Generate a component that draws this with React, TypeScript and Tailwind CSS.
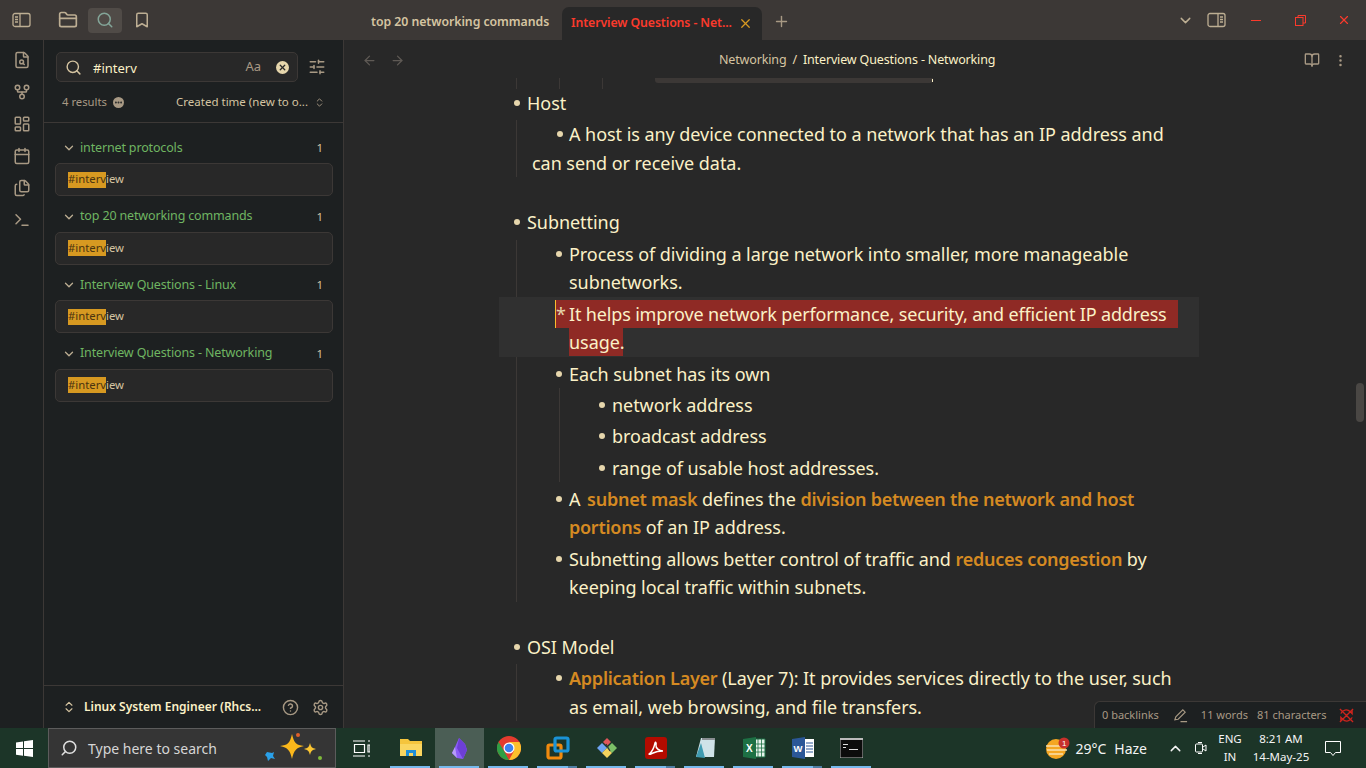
import React, { FunctionComponent, ReactNode } from 'react'
import {
  ArrowLeft, ArrowRight, Bookmark, BookOpen, Calendar, ChevronDown, ChevronsUpDown, ChevronUp, CircleHelp, Ellipsis,
  FileSearch, Files, FolderClosed, GitFork, LayoutDashboard, MoreVertical, Plus, Search, Settings, SlidersHorizontal, Terminal, X,
} from 'lucide-react'

const results = ['internet protocols', 'top 20 networking commands', 'Interview Questions - Linux', 'Interview Questions - Networking']

const Item: FunctionComponent<{ className?: string; children: ReactNode }> = ({ className = '', children }) => (
  <div className={`relative leading-[28px] ${className}`}>
    <span className="absolute left-[-13px] top-[11px] h-[6px] w-[6px] rounded-full bg-[#e6d6ac]" />
    {children}
  </div>
)

const Hl: FunctionComponent<{ children: ReactNode }> = ({ children }) => <b className="font-semibold tracking-[-0.25px] text-[#d58a22]">{children}</b>

const Result: FunctionComponent<{ title: string }> = ({ title }) => (
  <div>
    <div className="flex h-[32px] items-center pl-[18px] pr-[20px] pt-[2px] text-[#6fb562]">
      <ChevronDown size={14} className="text-[#bdae93]" strokeWidth={2.2} />
      <span className="ml-[4px] flex-1 text-[12.5px] tracking-[-0.15px]">{title}</span>
      <span className="text-[11.5px] text-[#d5c4a1]">1</span>
    </div>
    <div className="ml-[11px] mr-[10px] flex h-[33px] items-center rounded-[5px] border border-[#3c3836] bg-[#282828] px-[12px] text-[11.3px] text-[#d5c4a1]">
      <span className="flex h-[16px] items-center bg-[#d79921] text-[#4b3410]">#interv</span>iew
    </div>
  </div>
)

const Sidebar = () => (
  <aside className="flex w-[300px] shrink-0 flex-col border-r border-[#3c3836] bg-[#1d2021]">
    <div className="flex items-center pl-[12px] pr-[16px] pt-[12px]">
      <div className="flex h-[30px] w-[242px] items-center rounded-[5px] border border-[#3c3836] bg-[#282828] pl-[8px] pr-[8px]">
        <Search size={17} className="text-[#d5c4a1]" />
        <span className="ml-[11px] flex-1 pt-[3px] text-[13px] text-[#fbf1c7]">#interv</span>
        <span className="text-[13px] text-[#a89984]">Aa</span>
        <span className="ml-[15px] flex h-[13px] w-[13px] items-center justify-center rounded-full bg-[#e6d6ac]">
          <X size={9} strokeWidth={3.5} className="text-[#282828]" />
        </span>
      </div>
      <SlidersHorizontal size={18} className="ml-[10px] text-[#a89984]" />
    </div>
    <div className="flex h-[41px] items-center border-b border-[#3c3836] pl-[18px] pr-[18px]">
      <span className="text-[11.3px] text-[#a89984]">4 results</span>
      <span className="ml-[6px] flex h-[11px] w-[11px] items-center justify-center rounded-full bg-[#a89984]">
        <Ellipsis size={9} strokeWidth={3} className="text-[#1d2021]" />
      </span>
      <span className="ml-auto text-[11.5px] text-[#d5c4a1]">Created time (new to o...</span>
      <ChevronsUpDown size={11} className="ml-[6px] text-[#a89984]" />
    </div>
    <div className="flex flex-1 flex-col gap-[3.5px] pt-[8px]">
      {results.map((title) => <Result key={title} title={title} />)}
    </div>
    <div className="flex h-[43px] items-center border-t border-[#3c3836] pl-[18px] pr-[14px]">
      <ChevronsUpDown size={14} className="text-[#d5c4a1]" />
      <span className="ml-[8px] flex-1 text-[12px] font-semibold text-[#fbf1c7]">Linux System Engineer (Rhcs...</span>
      <CircleHelp size={17} className="text-[#a89984]" />
      <Settings size={17} className="ml-[13px] text-[#a89984]" />
    </div>
  </aside>
)

const Ribbon = () => (
  <nav className="flex w-[44px] shrink-0 flex-col items-center gap-[14px] border-r border-[#3c3836] bg-[#1d2021] pt-[11px] text-[#a89984]">
    <FileSearch size={18} />
    <GitFork size={18} />
    <LayoutDashboard size={18} />
    <Calendar size={18} />
    <Files size={18} />
    <Terminal size={18} />
  </nav>
)

const TitleBar = () => (
  <header className="flex h-[40px] shrink-0 bg-[#3c3836] text-[#bdae93]">
    <div className="flex items-center pl-[12px]">
      <svg width="19" height="16" viewBox="0 0 19 16" fill="none" stroke="currentColor" strokeWidth="1.3">
        <rect x="1" y="1.5" width="17" height="13" rx="2" />
        <path d="M8 1.5v13M3 5h3M3 7.5h3M3 10h3" />
      </svg>
      <FolderClosed size={20} className="ml-[27px]" />
      <span className="ml-[10px] flex h-[25px] w-[34px] items-center justify-center rounded-[4px] bg-[#504b47]">
        <Search size={18} className="text-[#83a598]" />
      </span>
      <Bookmark size={18} className="ml-[11px]" />
    </div>
    <div className="ml-[220px] flex items-end">
      <span className="mb-[1px] flex h-[33px] w-[191px] items-center whitespace-nowrap text-[12.3px] font-semibold tracking-[-0.05px] text-[#d5c4a1]">top 20 networking commands</span>
      <div className="flex h-[33px] w-[200px] items-center rounded-t-[7px] bg-[#282828] pl-[9px] pr-[9px] text-[12.3px] font-semibold tracking-[-0.1px] text-[#fb3a2c]">
        <span className="flex-1 whitespace-nowrap">Interview Questions - Net...</span>
        <X size={15} className="text-[#d79921]" />
      </div>
      <Plus size={17} className="mb-[10px] ml-[11px] text-[#a89984]" />
    </div>
    <div className="ml-auto flex items-center pr-[15px]">
      <ChevronDown size={17} />
      <svg width="19" height="16" viewBox="0 0 19 16" fill="none" stroke="currentColor" strokeWidth="1.3" className="ml-[13px]">
        <rect x="1" y="1.5" width="17" height="13" rx="2" />
        <path d="M11 1.5v13M13 5h3M13 7.5h3M13 10h3" />
      </svg>
      <span className="ml-[25px] h-[1px] w-[10px] bg-[#fb3a2c]" />
      <svg width="11" height="11" viewBox="0 0 11 11" fill="none" stroke="#fb3a2c" className="ml-[34px]">
        <rect x="0.5" y="2.5" width="7.5" height="8" />
        <path d="M3 2.5V0.5h7.5v7.5H8" />
      </svg>
      <X size={14} className="ml-[31px] text-[#fb3a2c]" />
    </div>
  </header>
)

const Editor = () => (
  <main className="flex min-w-0 flex-1 flex-col bg-[#282828]">
    <div className="flex h-[38px] shrink-0 items-center pl-[18px] pr-[18px] pt-[2px] text-[#a89984]">
      <ArrowLeft size={15} className="text-[#5f5a55]" />
      <ArrowRight size={15} className="ml-[13px] text-[#5f5a55]" />
      <div className="ml-[314px] flex-1 text-[12.5px] tracking-[-0.15px] text-[#d5c4a1]">
        Networking<span className="mx-[6px] text-[#ebdbb2]">/</span><span className="text-[#fbf1c7]">Interview Questions - Networking</span>
      </div>
      <BookOpen size={16} />
      <MoreVertical size={15} className="ml-[13px]" />
    </div>
    <div className="relative min-h-0 flex-1 overflow-hidden pr-[12px]">
      <div className="mx-auto w-[700px] text-[18px] tracking-[-0.05px] text-[#fbf1c7]">
        <div className="relative h-[11px]">
          <span className="absolute left-[17px] top-0 h-[11px] border-l border-[#3c3836]" />
          <span className="absolute left-[60px] top-0 h-[11px] border-l border-[#3c3836]" />
          <span className="absolute left-[103px] top-0 h-[11px] border-l border-[#3c3836]" />
          <span className="absolute left-[156px] top-0 h-[5px] w-[278px] rounded-b-[3px] bg-[#3c3836]" />
          <span className="absolute left-[433px] top-[1px] h-[3px] w-[1px] bg-[#fbf1c7]" />
        </div>
        <div className="pl-[28px]">
          <Item>Host</Item>
          <div className="ml-[-11px] mt-[3px] border-l border-[#3c3836] pl-[15px]">
            <div className="relative pl-[26px] leading-[28px]">
              <span className="absolute left-[25px] top-[11px] h-[6px] w-[6px] rounded-full bg-[#e6d6ac]" />
              <span className="ml-[11px]">A host is any device connected to a network that has an IP address and</span>
              <div className="ml-[-26px] mt-[1px]">can send or receive data.</div>
            </div>
          </div>
          <Item className="mt-[31px]">Subnetting</Item>
          <div className="ml-[-11px] mt-[4px] border-l border-[#3c3836] pb-[1px] pl-[52px]">
            <Item>Process of dividing a large network into smaller, more manageable<br />subnetworks.</Item>
            <div className="relative mt-[4px]">
              <div className="absolute bottom-[-1px] left-[-70px] top-[-3px] w-[700px] bg-[#303030]" />
              <div className="relative ml-[-14px] h-[28px] w-[623px] border-l border-[#fabd2f] bg-[#8f2a25] leading-[28px]">
                <span className="text-[#e6d6ac]"> *</span><span className="absolute left-[13px] whitespace-nowrap tracking-[-0.16px]">It helps improve network performance, security, and efficient IP address</span>
              </div>
              <div className="relative h-[28px] w-[54px] bg-[#8f2a25] leading-[28px]">usage.</div>
            </div>
            <Item className="mt-[4px]">Each subnet has its own</Item>
            <div className="ml-[-10px] border-l border-[#3c3836] pl-[52px] pt-[3px]">
              <Item>network address</Item>
              <Item className="mt-[3px]">broadcast address</Item>
              <Item className="mt-[4px]">range of usable host addresses.</Item>
            </div>
            <Item className="mt-[3px]">A <span className="ml-[2px]"><Hl>subnet mask</Hl></span> defines the <Hl>division between the network and host</Hl><br /><Hl>portions</Hl> of an IP address.</Item>
            <Item className="mt-[4px]">Subnetting allows better control of traffic and <Hl>reduces congestion</Hl> by<br />keeping local traffic within subnets.</Item>
          </div>
          <Item className="mt-[31px]">OSI Model</Item>
          <div className="ml-[-11px] mt-[3px] border-l border-[#3c3836] pl-[52px]">
            <Item><Hl>Application Layer</Hl> (Layer 7): It provides services directly to the user, such<div className="mt-[1px]">as email, web browsing, and file transfers.</div></Item>
          </div>
        </div>
      </div>
      <div className="absolute right-[2px] top-[305px] h-[39px] w-[8px] rounded-[4px] bg-[#4a4744]" />
      <div className="absolute bottom-0 right-0 flex h-[27px] w-[272px] items-center rounded-tl-[6px] border-l border-t border-[#3c3836] bg-[#1d2021] pl-[7px] text-[11px] text-[#a89984]">
        <span>0 backlinks</span>
        <svg width="15" height="15" viewBox="0 0 16 16" fill="none" stroke="currentColor" strokeWidth="1.2" className="ml-[14px]">
          <path d="M2 12.5 3 9.5 10.5 2l2.5 2.5L5.5 12zM8 14.5h7" />
        </svg>
        <span className="ml-[13px]">11 words</span>
        <span className="ml-[9px]">81 characters</span>
        <svg width="15" height="15" viewBox="0 0 16 16" fill="none" stroke="#cc241d" strokeWidth="1.4" className="ml-[13px]">
          <path d="M2 6a6 6 0 0 1 10-2l2 2V2M14 10a6 6 0 0 1-10 2l-2-2v4M1 1l14 14M15 1 1 15" />
        </svg>
      </div>
    </div>
  </main>
)

const AppSlot: FunctionComponent<{ children: ReactNode; active?: boolean; stacked?: boolean }> = ({ children, active, stacked }) => (
  <div className={`relative flex h-[40px] w-[49px] items-center justify-center ${active ? 'bg-[#4b5e55]' : ''}`}>
    {children}
    <span className={`absolute bottom-0 left-[4px] h-[2px] bg-[#76b9ed] ${stacked ? 'w-[31px]' : 'w-[40px]'}`} />
    {stacked && <span className="absolute bottom-0 left-[35px] h-[2px] w-[9px] bg-[#4f7ea3]" />}
  </div>
)

const Taskbar = () => (
  <footer className="flex h-[40px] shrink-0 items-center bg-[#1c3528] text-[#f4f4f4]">
    <div className="flex w-[48px] items-center justify-center">
      <svg width="17" height="17" viewBox="0 0 17 17" fill="white">
        <path d="M0 2.4 7 1.4v6.7H0zM8 1.3 17 0v8.1H8zM0 9h7v6.7l-7-1zM8 9h9v8l-9-1.300z" />
      </svg>
    </div>
    <div className="flex h-[40px] w-[288px] items-center border border-[#5c5c5c] bg-[#353535] pl-[11px]">
      <Search size={18} className="-scale-x-100 text-[#e0e0e0]" />
      <span className="ml-[10px] flex-1 text-[14px] text-[#d6d6d6]">Type here to search</span>
      <svg width="66" height="34" viewBox="0 0 66 34" className="mr-[9px]">
        <path d="M32 3c2 9 4 11 12 12-8 2-10 4-12 13-2-9-4-11-12-13 8-1 10-3 12-12z" fill="#fbb81b" />
        <path d="M50 12c1 4 2 5 6 6-4 1-5 2-6 6-1-4-2-5-6-6 4-1 5-2 6-6z" fill="#fbc531" />
        <path d="M7 21l5 1 2-1-1 4 2 3-4-1-3 3-1-4-2-2z" fill="#2aa0e8" />
        <circle cx="38" cy="4" r="2" fill="#e0602a" />
        <circle cx="60" cy="27" r="2" fill="#7fba3a" />
      </svg>
    </div>
    <div className="flex w-[50px] items-center justify-center">
      <svg width="17" height="17" viewBox="0 0 17 17" fill="none" stroke="white" strokeWidth="1.200">
        <path d="M0 1h12M0 16h12M1.500 4.500h10v8h-10zM15 1h2M15 5h2v7h-2zM15 16h2" />
      </svg>
    </div>
    <div className="flex">
      <AppSlot>
        <svg width="24" height="20" viewBox="0 0 24 20">
          <path d="M1 1h8l2 2h12v15H1z" fill="#f5c53d" />
          <path d="M1 6h22v12H1z" fill="#fad660" />
          <path d="M7 12h10v6h-3v-3h-4v3H7z" fill="#1f8fd8" />
        </svg>
      </AppSlot>
      <AppSlot active>
        <svg width="17" height="23" viewBox="0 0 17 23">
          <path d="M8 1 14 7l2 6-4 9-6-1-5-5 3-6z" fill="#8a5cf6" />
          <path d="M8 1 6 11l6 11 4-9-2-6z" fill="#6d3fd6" />
          <path d="M4 10 1 16l5 5z" fill="#b79cf8" />
        </svg>
      </AppSlot>
      <AppSlot>
        <svg width="24" height="24" viewBox="0 0 24 24">
          <circle cx="12" cy="12" r="12" fill="#e33b2e" />
          <path d="M12 24a12 12 0 0 1-10.400-18L7 15l5 9z" fill="#2f9e44" />
          <path d="M12 6h10.400A12 12 0 0 1 12 24l5-9z" fill="#fbc02d" />
          <circle cx="12" cy="12" r="5.500" fill="#fff" />
          <circle cx="12" cy="12" r="4.300" fill="#3b82f0" />
        </svg>
      </AppSlot>
      <AppSlot stacked>
        <svg width="24" height="24" viewBox="0 0 24 24" fill="none" strokeWidth="3.200">
          <rect x="2" y="9" width="13" height="13" rx="1.500" stroke="#f18a0e" />
          <rect x="9" y="2" width="13" height="13" rx="1.500" stroke="#1a93d6" />
        </svg>
      </AppSlot>
      <AppSlot>
        <svg width="24" height="24" viewBox="0 0 24 24">
          <path d="M8 6 12 2l4 4-4 4z" fill="#e0565b" />
          <path d="M2 12l5-5 5 5-5 5z" fill="#6ea4f2" />
          <path d="M12 12l5-5 5 5-5 5z" fill="#7cc068" />
          <path d="M7 17l5-5 5 5-5 5z" fill="#f4d35e" />
          <path d="M11 8l4 7" stroke="#333" strokeWidth="1.200" />
        </svg>
      </AppSlot>
      <AppSlot stacked>
        <svg width="22" height="22" viewBox="0 0 22 22">
          <rect width="22" height="22" rx="3" fill="#b30b00" />
          <path d="M4 17c3-2 5-6 6-11 .5-2 1.500 0 1 2-.5 3 3 6 7 6-3 0-7 .5-10 2-2 1-4 2-4 1z" fill="none" stroke="#fff" strokeWidth="1.400" />
        </svg>
      </AppSlot>
      <AppSlot>
        <svg width="24" height="24" viewBox="0 0 24 24">
          <path d="M8 2h14l-1 19H3z" fill="#cfe3e8" />
          <path d="M3 21 8 7l4 15z" fill="#3f9bb0" />
          <path d="M9 2h13v2H9z" fill="#8a8f92" />
        </svg>
      </AppSlot>
      <AppSlot>
        <svg width="24" height="24" viewBox="0 0 24 24">
          <path d="M13 3h10v18H13z" fill="#e8f3ec" stroke="#1d7044" />
          <path d="M16 3v18M19.500 3v18M13 8h10M13 12h10M13 16h10" stroke="#1d7044" strokeWidth=".8" />
          <path d="M1 3l13-2v22L1 21z" fill="#1d7044" />
          <text x="4" y="16" fontSize="10" fontWeight="700" fill="#fff" fontFamily="Liberation Sans, sans-serif">X</text>
        </svg>
      </AppSlot>
      <AppSlot stacked>
        <svg width="24" height="24" viewBox="0 0 24 24">
          <path d="M13 3h10v18H13z" fill="#fff" />
          <path d="M15 7h7M15 10h7M15 13h7M15 16h7" stroke="#2b5797" />
          <path d="M1 3l13-2v22L1 21z" fill="#2b5797" />
          <text x="2.500" y="16" fontSize="9.500" fontWeight="700" fill="#fff" fontFamily="Liberation Sans, sans-serif">W</text>
        </svg>
      </AppSlot>
      <AppSlot>
        <svg width="23" height="20" viewBox="0 0 23 20">
          <rect width="23" height="20" fill="#0c0c0c" stroke="#bbb" />
          <path d="M0 0h23v2H0z" fill="#bbb" />
          <path d="M3 6h5v1H3zM3 9h3v1H3zM9 11h9v1H9z" fill="#ddd" />
        </svg>
      </AppSlot>
    </div>
    <div className="ml-auto flex items-center pr-[24px]">
      <svg width="25" height="22" viewBox="0 0 25 22">
        <circle cx="11" cy="12" r="10" fill="#f5a623" />
        <path d="M1 9h16M2 13h20M4 17h14" stroke="#f9dfae" strokeWidth="1.500" />
        <circle cx="19" cy="6" r="5.500" fill="#c7302b" />
        <text x="17" y="9" fontSize="8" fill="#fff" fontFamily="Liberation Sans, sans-serif">1</text>
      </svg>
      <span className="ml-[5px] text-[14px]">29°C</span>
      <span className="ml-[8px] text-[14px]">Haze</span>
      <ChevronUp size={17} className="ml-[20px]" />
      <svg width="13" height="16" viewBox="0 0 13 16" fill="none" stroke="white" className="ml-[10px]">
        <path d="M4 2.500h4M4 13.500h4M1.500 5v6a1 1 0 0 0 1 1h5a1 1 0 0 0 1-1V5a1 1 0 0 0-1-1h-5a1 1 0 0 0-1 1zM9 7l3-2v6L9 9" />
      </svg>
      <div className="ml-[11px] flex w-[24px] flex-col items-center text-[11.5px] leading-[18px]">
        <span>ENG</span>
        <span>IN</span>
      </div>
      <div className="ml-[9px] flex w-[60px] flex-col items-center text-[11.5px] leading-[18px]">
        <span>8:21 AM</span>
        <span>14-May-25</span>
      </div>
      <svg width="18" height="17" viewBox="0 0 18 17" fill="none" stroke="white" className="ml-[13px]">
        <path d="M1.500 1.500h15v11h-5l-2.500 3-2.500-3h-5z" />
      </svg>
    </div>
  </footer>
)

export default function App() {
  return (
    <div className="flex h-screen w-[1366px] flex-col overflow-hidden bg-[#282828] font-['Noto_Sans',sans-serif]">
      <TitleBar />
      <div className="flex min-h-0 flex-1">
        <Ribbon />
        <Sidebar />
        <Editor />
      </div>
      <Taskbar />
    </div>
  )
}
